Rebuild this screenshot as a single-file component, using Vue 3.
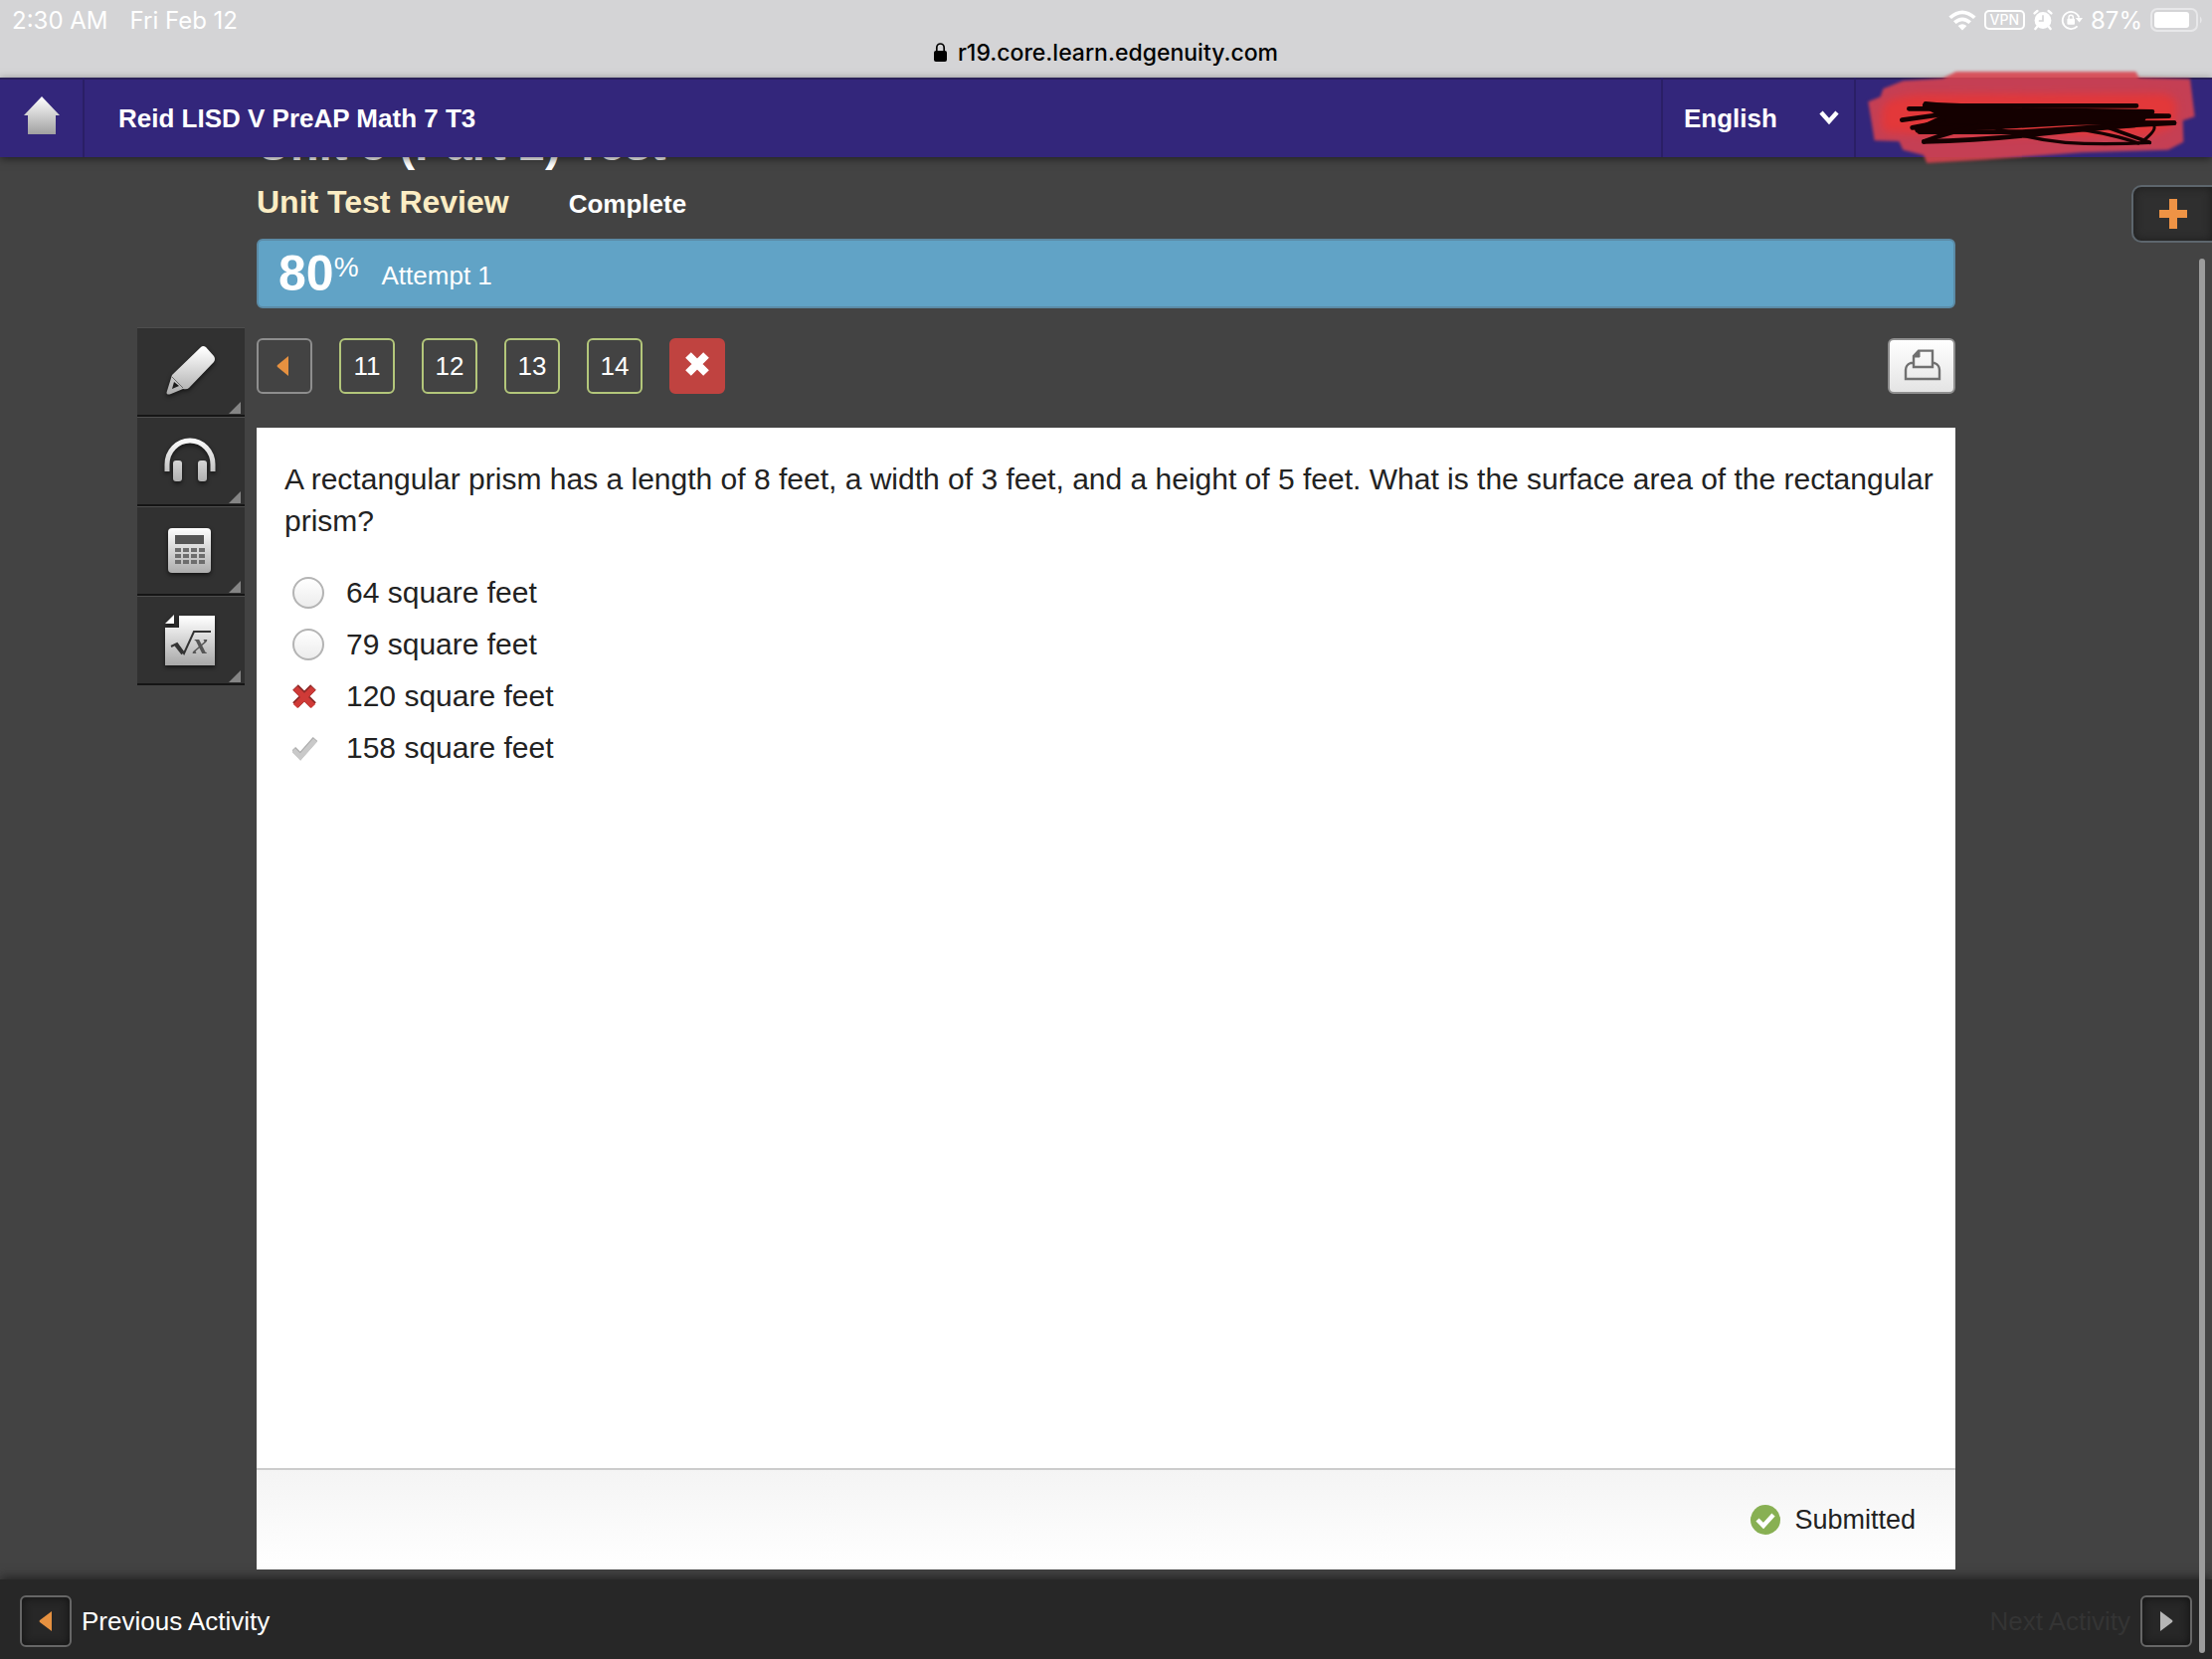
<template>
  <div class="page">
    <div class="browser">
      <div class="browser__status">
        <div class="browser__time">
          <span>2:30 AM</span>
          <span>Fri Feb 12</span>
        </div>
        <div class="browser__icons">
          <svg width="28" height="22" viewBox="0 0 28 22" fill="#ffffff">
            <path d="M14 21.5 L9.6 17 Q14 13.4 18.4 17 Z" />
            <path d="M5 12.2 Q14 4.6 23 12.2 L20.4 14.9 Q14 9.4 7.6 14.9 Z" />
            <path d="M0.4 7.4 Q14 -4.6 27.6 7.4 L25 10.1 Q14 0.6 3 10.1 Z" />
          </svg>
          <span class="browser__vpn">VPN</span>
          <svg width="20" height="22" viewBox="0 0 20 22">
            <circle cx="10" cy="11.5" r="8.4" fill="#ffffff" />
            <path d="M1.6 4.4 L4.4 2 M18.4 4.4 L15.6 2 M4 18 L2.4 20 M16 18 L17.6 20" stroke="#ffffff" stroke-width="2.4" stroke-linecap="round" />
            <path d="M10 6.2 V12 H5.8" fill="none" stroke="#d4d4d6" stroke-width="1.6" />
          </svg>
          <svg width="22" height="22" viewBox="0 0 22 22">
            <path d="M16.6 17.4 A8.6 8.6 0 1 1 18.4 8.6" fill="none" stroke="#ffffff" stroke-width="1.8" />
            <path d="M14.8 9 H22 L18.6 13.6 Z" fill="#ffffff" />
            <rect x="6.4" y="9.8" width="7.6" height="6" rx="1" fill="#ffffff" />
            <path d="M8 10 V8.4 A2.2 2.2 0 0 1 12.4 8.4 V10" fill="none" stroke="#ffffff" stroke-width="1.4" />
          </svg>
          <span>87%</span>
          <svg class="browser__battery" width="54" height="24" viewBox="0 0 54 24">
            <rect x="1" y="1" width="46" height="22" rx="6" fill="none" stroke="#e8e8ea" stroke-width="2" />
            <rect x="4" y="4" width="35" height="16" rx="3" fill="#ffffff" />
            <path d="M50 8.4 Q53.4 12 50 15.6 Z" fill="#e8e8ea" />
          </svg>
        </div>
      </div>
      <div class="browser__url">
        <svg width="13" height="19" viewBox="0 0 13 19">
          <rect x="0" y="8" width="13" height="11" rx="2" fill="#000000" />
          <path d="M2.8 9 V5 A3.7 4 0 0 1 10.2 5 V9" fill="none" stroke="#000000" stroke-width="1.7" />
        </svg>
        <span>r19.core.learn.edgenuity.com</span>
      </div>
    </div>

    <header class="header">
      <a class="header__home" href="#" aria-label="Home">
        <svg width="40" height="44" viewBox="0 0 40 44">
          <defs>
            <linearGradient id="home" x1="0" y1="0" x2="0" y2="1">
              <stop offset="0" stop-color="#ffffff" />
              <stop offset="1" stop-color="#a0a0a0" />
            </linearGradient>
          </defs>
          <path d="M20 1 L38 20 H34 V39 H6 V20 H2 Z" fill="url(#home)" />
        </svg>
      </a>
      <span class="header__title">Reid LISD V PreAP Math 7 T3</span>
      <div class="header__language">
        <select v-model="language" aria-label="Language">
          <option>English</option>
        </select>
        <svg width="22" height="18" viewBox="0 0 22 18">
          <path d="M3 4 L11 13 L19 4" fill="none" stroke="#ffffff" stroke-width="4.4" />
        </svg>
      </div>
      <button class="header__account" type="button" aria-label="Account">
        <svg class="header__scribble" viewBox="0 0 1092 330">
          <g class="header__marker">
            <path
              d="M55 115 L92 100 L100 76 L160 52 L280 44 L320 24 L862 24 L872 42 L1026 46 L1040 160 L1004 172 L1006 236 L960 260 L700 268 L400 290 L232 300 L222 276 L160 260 L148 234 L74 232 Z"
              fill="#d9434f"
              fill-opacity="0.88"
            />
            <path
              class="header__marker-core"
              d="M110 115 Q140 98 200 92 L940 90 Q985 94 986 135 L975 190 L900 218 L260 216 L100 206 Q84 150 110 115 Z"
              fill="#e3383a"
            />
          </g>
          <g fill="none" stroke="#140000" stroke-width="14" stroke-linecap="round" stroke-linejoin="round">
            <path d="M228 121 Q300 128 400 127 L864 127" />
            <path d="M178 136 H300 L560 140 L912 145" />
            <path d="M157 170 L300 150 L962 158 L300 172 L188 193 L420 176 L978 179" />
            <path d="M228 125 L290 160 L205 200 L500 186 L780 170 L900 152 L620 148 L320 140" stroke-width="18" />
            <path d="M270 145 L880 162 L300 168 L700 150" stroke-width="26" />
            <path d="M210 206 L520 206 L760 190 L978 179" />
            <path d="M223 235 Q300 205 400 186" />
            <path d="M223 235 Q380 232 540 215 T860 186" />
            <path d="M390 178 Q520 226 650 238 Q760 246 904 238" stroke-width="10" />
            <path d="M680 196 Q800 214 870 240" stroke-width="10" />
            <path d="M770 190 L904 238" stroke-width="11" />
            <path d="M918 190 Q922 204 880 236" stroke-width="9" />
          </g>
        </svg>
      </button>
    </header>

    <main class="main">
      <aside class="tools">
        <button v-for="tool in tools" :key="tool" class="tools__button" type="button" :aria-label="tool">
          <svg width="56" height="56" viewBox="0 0 56 56">
            <defs>
              <linearGradient :id="`grad-${tool}`" gradientUnits="userSpaceOnUse" x1="0" y1="4" x2="0" y2="52">
                <stop offset="0" stop-color="#ffffff" />
                <stop offset="1" stop-color="#a9a9a9" />
              </linearGradient>
            </defs>
            <g v-if="tool === 'highlighter'">
              <path d="M38 3 Q40 1 43 3 L51 12 Q53 15 51 18 L26 44 Q24 46 20 45 L8 50 Q2 52 4 47 L9 31 Z M11 38 L9 45 L16 42 Z" fill="url(#grad-highlighter)" fill-rule="evenodd" />
              <path d="M9 33 L20 44" stroke="#6e6e6e" stroke-width="1" />
            </g>
            <g v-else-if="tool === 'headphones'" fill="none">
              <path d="M4 38 V31 A23 24 0 0 1 50 31 V38" stroke="url(#grad-headphones)" stroke-width="5" />
              <rect x="10" y="27" width="9" height="21" rx="3" fill="url(#grad-headphones)" />
              <rect x="35" y="27" width="9" height="21" rx="3" fill="url(#grad-headphones)" />
            </g>
            <g v-else-if="tool === 'calculator'">
              <rect x="5" y="5" width="43" height="45" rx="4" fill="url(#grad-calculator)" />
              <rect x="12" y="12" width="29" height="9" fill="#555555" />
              <template v-for="row in 3" :key="row">
                <rect v-for="col in 4" :key="col" :x="4 + col * 8" :y="19 + row * 6" width="6" height="4" fill="#6d6d6d" />
              </template>
            </g>
            <g v-else>
              <path d="M16 3 H52 V53 H2 V15 H16 Z" fill="url(#grad-formula)" />
              <path d="M11 2 V11 H2 Z" fill="#ffffff" />
              <path d="M8 34 L14 31 L21 41 L31 19 H48" fill="none" stroke="#333333" stroke-width="2" />
              <path d="M13 32 L20 41" stroke="#333333" stroke-width="4" />
              <text x="30" y="41" class="tools__x">x</text>
            </g>
          </svg>
        </button>
      </aside>

      <section class="content">
        <h1 class="content__unit">Unit 5 (Part 2) Test</h1>
        <div class="content__heading">
          <h2>Unit Test Review</h2>
          <span>Complete</span>
        </div>

        <div class="score">
          <span class="score__value">80</span>
          <span class="score__percent">%</span>
          <span class="score__attempt">Attempt 1</span>
        </div>

        <nav class="pager">
          <button class="pager__item pager__item--back" type="button" aria-label="Previous questions">
            <svg width="16" height="22" viewBox="0 0 16 22">
              <path d="M12 1 V21 L1 12 Q0 11 1 10 Z" fill="#e69140" />
            </svg>
          </button>
          <button v-for="n in questions" :key="n" class="pager__item" type="button">{{ n }}</button>
          <button class="pager__item pager__item--wrong" type="button" aria-label="Question 15, incorrect">
            <svg width="28" height="30" viewBox="0 0 28 30">
              <path d="M5 4 L23 22 M23 4 L5 22" stroke="#ffffff" stroke-width="8" />
            </svg>
          </button>
          <button class="pager__print" type="button" aria-label="Print">
            <svg width="40" height="34" viewBox="0 0 40 34" fill="none" stroke="#707070" stroke-width="2.4">
              <path d="M12 14 H9 Q4 16 4 21 V30 H38 V21 Q38 16 33 14 H31" />
              <path d="M12 18 V7 L17 1.6 H31 V18 Z" />
              <path d="M18 2 V8 H12 Z" fill="#707070" stroke-width="1" />
            </svg>
          </button>
        </nav>

        <article class="card">
          <form class="card__body" @submit.prevent>
            <p class="card__question">
              A rectangular prism has a length of 8 feet, a width of 3 feet, and a height of 5 feet. What is the
              surface area of the rectangular prism?
            </p>
            <label v-for="option in options" :key="option.text" class="option">
              <span class="option__marker">
                <svg v-if="option.mark === 'wrong'" width="28" height="28" viewBox="0 0 28 28">
                  <path d="M3 5 L21 23 M21 5 L3 23" stroke="#8e2a28" stroke-width="8" />
                  <path d="M3 6 L21 24 M21 6 L3 24" stroke="#cf3a37" stroke-width="6" />
                </svg>
                <svg v-else-if="option.mark === 'right'" width="28" height="28" viewBox="0 0 28 28">
                  <path d="M1 15 L8 22 L23 5" fill="none" stroke="#a9a9a9" stroke-width="6" />
                  <path d="M1 16 L8 23 L23 6" fill="none" stroke="#c9c9c9" stroke-width="5" />
                </svg>
                <input v-else v-model="answer" type="radio" name="answer" :value="option.text" />
              </span>
              {{ option.text }}
            </label>
          </form>
          <footer class="card__footer">
            <svg width="30" height="30" viewBox="0 0 30 30">
              <circle cx="15" cy="15" r="15" fill="#88b053" />
              <path d="M7 15 L13 21 L23 10" fill="none" stroke="#ffffff" stroke-width="4.4" />
            </svg>
            <span>Submitted</span>
          </footer>
        </article>
      </section>

      <aside class="side">
        <button class="side__add" type="button" aria-label="Add">
          <svg width="28" height="30" viewBox="0 0 28 30">
            <path d="M10 0 H18 V11 H28 V19 H18 V30 H10 V19 H0 V11 H10 Z" fill="#ee9345" />
          </svg>
        </button>
      </aside>
    </main>

    <footer class="bottom">
      <button class="bottom__button" type="button">
        <span class="bottom__arrow">
          <svg width="14" height="22" viewBox="0 0 14 22">
            <path d="M13 1 V21 L1 12 Q0 11 1 10 Z" fill="#e69140" />
          </svg>
        </span>
        Previous Activity
      </button>
      <button class="bottom__button bottom__button--next" type="button" disabled>
        Next Activity
        <span class="bottom__arrow">
          <svg width="14" height="22" viewBox="0 0 14 22">
            <path d="M1 1 V21 L13 12 Q14 11 13 10 Z" fill="#b5b5b5" />
          </svg>
        </span>
      </button>
    </footer>

    <div class="scrollbar"></div>
  </div>
</template>

<script setup>
import { ref } from 'vue'

const language = ref('English')
const answer = ref(null)

const tools = ['highlighter', 'headphones', 'calculator', 'formula']
const questions = [11, 12, 13, 14]

const options = [
  { text: '64 square feet' },
  { text: '79 square feet' },
  { text: '120 square feet', mark: 'wrong' },
  { text: '158 square feet', mark: 'right' }
]
</script>

<style>
body {
  margin: 0;
  background: #434343;
}
</style>

<style scoped>
.page {
  display: flex;
  flex-direction: column;
  min-height: 100vh;
  font-family: "Liberation Sans", Arial, sans-serif;
  font-size: 26px;
  color: #ffffff;
  background: #434343;
}

button,
select {
  margin: 0;
  padding: 0;
  border: none;
  font: inherit;
  color: inherit;
  background: none;
  cursor: pointer;
}

svg {
  display: block;
  flex: none;
}

/* Browser bar */
.browser {
  padding-bottom: 13px;
  background: #d4d4d6;
  font-family: Inter, sans-serif;
  font-size: 24px;
}

.browser__status {
  display: flex;
  justify-content: space-between;
  align-items: center;
  height: 40px;
  padding: 0 8px 0 12px;
}

.browser__time {
  display: flex;
  gap: 22px;
}

.browser__icons {
  display: flex;
  align-items: center;
  gap: 8px;
}

.browser__vpn {
  padding: 0 4px;
  border: 2px solid #ffffff;
  border-radius: 5px;
  font-size: 14px;
  font-weight: 500;
  line-height: 16px;
}

.browser__url {
  display: flex;
  justify-content: center;
  align-items: center;
  gap: 11px;
  height: 25px;
  font-size: 23px;
  font-weight: 500;
  color: #000000;
}

/* Header */
.header {
  position: relative;
  z-index: 2;
  display: flex;
  align-items: stretch;
  height: 80px;
  background: #33267b;
  box-shadow: inset 0 2px 0 #2a2159, 0 2px 8px rgba(0, 0, 0, 0.5);
  font-weight: bold;
}

.header__home {
  display: flex;
  align-items: center;
  justify-content: center;
  width: 83px;
  border-right: 2px solid #2a1f66;
}

.header__title {
  flex: 1;
  padding-left: 34px;
  line-height: 82px;
}

.header__language {
  display: flex;
  align-items: center;
  width: 192px;
  border-left: 2px solid #2a1f66;
  border-right: 2px solid #2a1f66;
}

.header__language select {
  flex: 1;
  height: 80px;
  padding: 2px 0 0 21px;
  appearance: none;
  font-weight: bold;
}

.header__language svg {
  margin-right: 14px;
}

.header__account {
  position: relative;
  width: 358px;
}

.header__scribble {
  position: absolute;
  top: -14px;
  right: 0;
  width: 364px;
  height: 110px;
}

.header__marker {
  filter: blur(4px);
}

.header__marker-core {
  filter: blur(12px);
}

/* Main */
.main {
  flex: 1;
  display: grid;
  grid-template-columns: 258px 1fr 258px;
}

.tools {
  display: flex;
  flex-direction: column;
  align-items: flex-end;
  padding: 171px 12px 0 0;
}

.tools__button {
  position: relative;
  display: flex;
  align-items: center;
  justify-content: center;
  width: 108px;
  height: 90px;
  border-top: 1px solid #4e4e4e;
  border-bottom: 2px solid #151515;
  background: #313131;
}

.tools__button svg {
  filter: drop-shadow(0 2px 2px rgba(0, 0, 0, 0.6));
}

.tools__button::after {
  content: "";
  position: absolute;
  right: 4px;
  bottom: 1px;
  border-left: 12px solid transparent;
  border-bottom: 12px solid #858585;
}

.tools__x {
  font-family: "Liberation Serif", serif;
  font-size: 30px;
  font-style: italic;
  font-weight: bold;
  fill: #555555;
}

.content {
  display: flex;
  flex-direction: column;
  min-width: 0;
  padding-bottom: 10px;
}

/* Scrolled partly under the header */
.content__unit {
  margin: -37px 0 0;
  font-size: 47px;
  line-height: 48px;
}

.content__heading {
  display: flex;
  align-items: baseline;
  gap: 60px;
  margin-top: 16px;
  font-weight: bold;
}

.content__heading h2 {
  margin: 0;
  font-size: 32px;
  line-height: 36px;
  color: #fbedc4;
}

.score {
  display: flex;
  align-items: flex-start;
  box-sizing: border-box;
  height: 70px;
  margin-top: 19px;
  padding: 0 20px;
  border: 2px solid #5b8ba6;
  border-radius: 6px;
  background: #61a3c6;
}

.score__value {
  font-size: 50px;
  font-weight: bold;
  line-height: 66px;
}

.score__percent {
  font-size: 28px;
  line-height: 54px;
}

.score__attempt {
  margin-left: 23px;
  line-height: 70px;
}

.pager {
  display: flex;
  gap: 27px;
  margin-top: 30px;
}

.pager__item {
  display: flex;
  align-items: center;
  justify-content: center;
  width: 56px;
  height: 56px;
  border: 2px solid #b3c67a;
  border-radius: 6px;
}

.pager__item--back {
  border-color: #8e8e8e;
}

.pager__item--wrong {
  border-color: #c04340;
  background: #c04340;
}

.pager__print {
  display: flex;
  align-items: center;
  justify-content: center;
  width: 68px;
  height: 56px;
  margin-left: auto;
  border: 2px solid #8f8f8f;
  border-radius: 6px;
  background: linear-gradient(#ffffff, #e4e4e4);
}

.card {
  flex: 1;
  display: flex;
  flex-direction: column;
  margin-top: 34px;
  background: #ffffff;
  color: #222222;
}

.card__body {
  flex: 1;
  padding: 31px 4px 30px 28px;
  font-size: 30px;
}

.card__question {
  margin: 0 0 25px;
  line-height: 42px;
}

.option {
  display: flex;
  align-items: center;
  line-height: 52px;
}

.option__marker {
  display: flex;
  width: 54px;
  padding-left: 8px;
}

.option input {
  width: 32px;
  height: 32px;
  margin: 0;
  border: 2px solid #b4b4b4;
  border-radius: 50%;
  appearance: none;
  background: linear-gradient(#ffffff, #ececec);
}

.card__footer {
  display: flex;
  justify-content: flex-end;
  align-items: center;
  gap: 14px;
  height: 100px;
  padding-right: 40px;
  border-top: 2px solid #cccccc;
  background: linear-gradient(#f4f4f4, #ffffff);
  font-size: 27px;
}

.side {
  display: flex;
  justify-content: flex-end;
  align-items: flex-start;
  padding-top: 28px;
}

.side__add {
  display: flex;
  align-items: center;
  justify-content: center;
  width: 81px;
  height: 58px;
  border: 2px solid #5d666d;
  border-right: none;
  border-radius: 10px 0 0 10px;
  background: #2f2f2f;
  box-shadow: inset 0 0 10px #1d1d1d;
}

/* Bottom bar */
.bottom {
  display: flex;
  justify-content: space-between;
  align-items: center;
  box-sizing: border-box;
  height: 80px;
  padding: 4px 20px 0;
  background: #272727;
  box-shadow: 0 -2px 10px rgba(0, 0, 0, 0.5);
}

.bottom__button {
  display: flex;
  align-items: center;
  gap: 10px;
}

.bottom__button--next {
  color: #343434;
  cursor: default;
}

.bottom__arrow {
  display: flex;
  align-items: center;
  justify-content: center;
  width: 48px;
  height: 48px;
  border: 2px solid #666666;
  border-radius: 6px;
  box-shadow: inset 0 0 10px #111111;
}

.scrollbar {
  position: fixed;
  z-index: 3;
  top: 260px;
  right: 7px;
  bottom: 6px;
  width: 6px;
  border-radius: 3px;
  background: #9c9c9c;
}
</style>
